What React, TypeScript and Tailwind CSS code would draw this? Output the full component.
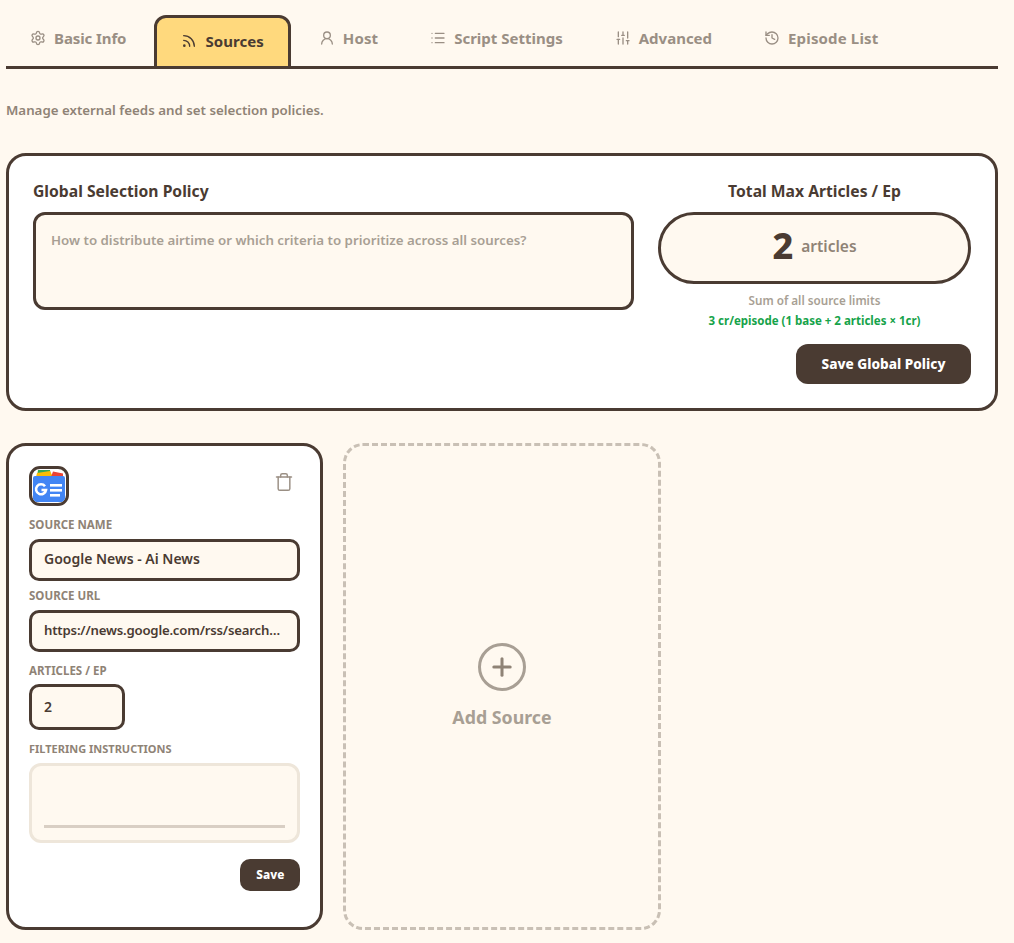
import { Settings, Rss, UserRound, List, SlidersVertical, History, Trash, Plus } from "lucide-react";

const tabs = [
  { label: "Basic Info", Icon: Settings, cls: "tracking-[-0.1px]" },
  { label: "Sources", Icon: Rss, active: true, cls: "tracking-[0.06px]" },
  { label: "Host", Icon: UserRound, cls: "tracking-[0.1px]" },
  { label: "Script Settings", Icon: List, cls: "" },
  { label: "Advanced", Icon: SlidersVertical, cls: "" },
  { label: "Episode List", Icon: History, cls: "tracking-[0.15px]" },
];

function Tabs() {
  return (
    <div className="flex h-[69px] items-end gap-1 border-b-[3px] border-[#4a3b32]">
      {tabs.map(({ label, Icon, active, cls }) =>
        active ? (
          <div key={label} className={`-mb-[3px] flex h-[54px] items-center gap-2 rounded-t-xl border-[3px] border-[#4a3b32] bg-[#ffd97d] px-6 pb-[2px] text-[15px] font-bold text-[#4a3b32] ${cls}`}>
            <Icon size={16} strokeWidth={2} className="shrink-0" />
            <span>{label}</span>
          </div>
        ) : (
          <div key={label} className={`flex h-[56px] items-center gap-2 px-6 text-[15px] font-bold text-[#9a8f84] ${cls}`}>
            <Icon size={16} strokeWidth={2} className="shrink-0" />
            <span>{label}</span>
          </div>
        ),
      )}
    </div>
  );
}

function Logo() {
  return (
    <div className="h-10 w-10 overflow-hidden rounded-[11px] border-[3px] border-[#4a3b32] bg-white">
      <svg viewBox="0 0 34 34" className="block h-full w-full">
        <path d="M5 8 L6 1 H18 L19 8 Z" fill="#34a853" />
        <path d="M4 8 L5 4 L18 2 L21 8 Z" fill="#fbbc04" />
        <path d="M19 8 L21 2.5 L31 4.5 V8 Z" fill="#ea4335" />
        <rect x="1" y="7" width="32" height="26" rx="2" fill="#4285f4" />
        <path d="M13 17.2 A5 5 0 1 0 14 21 H9.5" fill="none" stroke="#fff" strokeWidth="2.6" />
        <rect x="18" y="15" width="12" height="2.6" fill="#fff" />
        <rect x="18" y="20" width="12" height="2.6" fill="#fff" />
        <rect x="18" y="25" width="10" height="2.6" fill="#fff" />
      </svg>
    </div>
  );
}

function Label({ children, className = "" }: { children: string; className?: string }) {
  return <div className={`font-bold uppercase leading-[14px] text-[#8f8376] ${className}`}>{children}</div>;
}

const inputCls =
  "block rounded-[10px] border-[3px] border-[#4a3b32] bg-[#fff9f0] px-3 font-semibold text-[#4a3b32] outline-none";

export default function App() {
  return (
    <div className="min-h-[943px] bg-[#fff9f0] px-[6px] pr-[16px] font-['Noto_Sans',sans-serif]">
      <Tabs />
      <p className="mt-[31px] text-[13.3px] font-semibold leading-[20px] text-[#8f8376]">Manage external feeds and set selection policies.</p>

      <section className="mt-[33px] h-[258px] rounded-[20px] border-[3px] border-[#4a3b32] bg-white px-6 pt-[23px]">
        <div className="flex gap-6">
          <div className="flex min-w-0 flex-1 flex-col">
            <h2 className="mb-[9px] text-[15.7px] font-bold leading-[24px] text-[#4a3b32]">Global Selection Policy</h2>
            <textarea
              readOnly
              placeholder="How to distribute airtime or which criteria to prioritize across all sources?"
              className="h-[98px] w-full resize-none rounded-xl border-[3px] border-[#4a3b32] bg-[#fff9f0] px-[15px] py-[13px] text-[13.3px] font-semibold leading-[24px] text-[#4a3b32] outline-none placeholder:text-[#a89f94]"
            />
          </div>
          <div className="flex w-[313px] shrink-0 flex-col items-center">
            <h2 className="mb-[9px] text-[15.7px] font-bold leading-[24px] text-[#4a3b32]">Total Max Articles / Ep</h2>
            <div className="flex h-[72px] w-full items-center justify-center gap-2 rounded-full border-[3px] border-[#4a3b32] bg-[#fff9f0] pb-1">
              <span className="text-4xl font-extrabold text-[#4a3b32]">2</span>
              <span className="mt-[2px] text-[15.5px] font-semibold text-[#8f8376]">articles</span>
            </div>
            <div className="mt-[8px] text-[11.7px] font-semibold leading-[16px] text-[#a89f94]">Sum of all source limits</div>
            <div className="mt-[5px] text-[11.5px] font-bold leading-[16px] text-[#16a34a]">3 cr/episode (1 base + 2 articles × 1cr)</div>
            <div className="mt-[15px] flex w-full justify-end">
              <button className="h-10 w-[175px] rounded-xl bg-[#4a3b32] text-[13.6px] font-extrabold text-white">Save Global Policy</button>
            </div>
          </div>
        </div>
      </section>

      <div className="mt-[32px] grid grid-cols-3 gap-5">
        <div className="h-[487px] rounded-[20px] border-[3px] border-[#4a3b32] bg-white px-5 pt-5">
          <div className="flex items-start justify-between">
            <Logo />
            <Trash size={20} strokeWidth={1.75} className="mr-[6px] mt-[6px] text-[#9a8f84]" />
          </div>
          <Label className="mt-3 text-[11.5px]">Source Name</Label>
          <input readOnly value="Google News - Ai News" className={`${inputCls} mt-[7px] h-[42px] w-full pb-[3px] text-sm`} />
          <Label className="mt-[8px] text-[11.5px]">Source URL</Label>
          <input readOnly value="https://news.google.com/rss/search?q=AI+news&hl=en" className={`${inputCls} mt-[7px] h-[42px] w-full text-ellipsis pb-[3px] text-[13.2px] tracking-[-0.2px]`} />
          <Label className="mt-[12px] text-[11.5px]">Articles / EP</Label>
          <input readOnly value="2" className={`${inputCls} mt-[6px] h-[46px] w-24 pb-[2px] text-sm`} />
          <Label className="mt-[12px] text-[11px]">Filtering Instructions</Label>
          <div className="mt-[7px] flex h-20 flex-col justify-end rounded-xl border-[3px] border-[#eee6da] bg-[#fff9f0] px-3 pb-[12px]">
            <div className="h-[3px] bg-[#d9cfc4]" />
          </div>
          <div className="mt-4 flex justify-end">
            <button className="h-8 w-[60px] rounded-[10px] bg-[#4a3b32] text-[11.8px] font-extrabold text-white">Save</button>
          </div>
        </div>

        <div className="flex h-[487px] flex-col items-center justify-center gap-[12px] rounded-[20px] border-[3px] border-dashed border-[#c9c0b5]">
          <div className="flex h-12 w-12 items-center justify-center rounded-full border-[3px] border-[#a89f94] text-[#8f8376]">
            <Plus size={28} strokeWidth={2.6} />
          </div>
          <span className="text-[17.8px] font-bold leading-[28px] text-[#a89f94]">Add Source</span>
        </div>
      </div>
    </div>
  );
}
